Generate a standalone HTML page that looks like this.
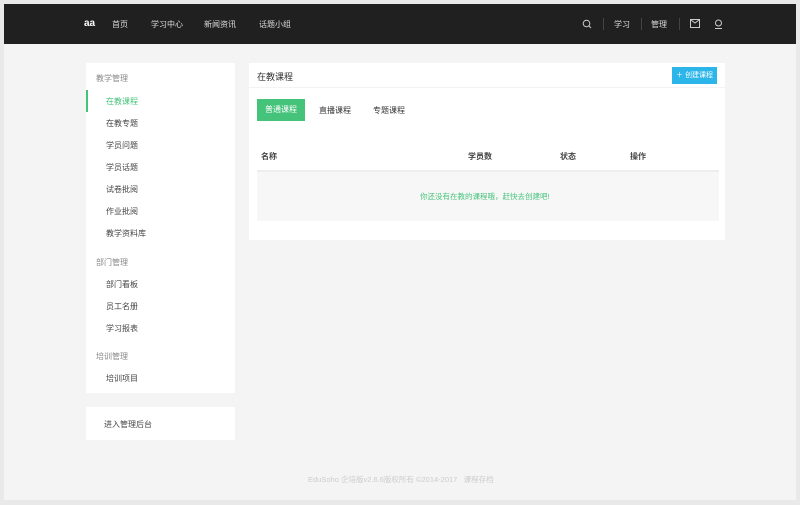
<!DOCTYPE html>
<html><head><meta charset="utf-8"><style>
*{margin:0;padding:0;box-sizing:border-box}
body{width:800px;height:505px;background:#e9e9e9;font-family:"Liberation Sans","Noto Sans CJK SC",sans-serif;font-size:8px;color:#333;position:relative;overflow:hidden}
.page{position:absolute;left:4px;top:4px;width:792px;height:496px;background:#f4f4f4}
.hd{position:absolute;left:0;top:0;width:792px;height:40px;background:#202020;color:#ddd}
.hd span{position:absolute;top:15px;font-size:8px}
.sep{position:absolute;top:14px;width:1px;height:12px;background:#444}
.box{position:absolute;background:#fff}
.side div{position:absolute;font-size:8px;color:#444}
.side .g{color:#888}
.abs{position:absolute}
</style></head><body><div class="page">
<div class="hd">
<span style="left:80px;top:14px;font-size:10px;font-weight:bold;color:#fff">aa</span>
<span style="left:108px">首页</span>
<span style="left:147px">学习中心</span>
<span style="left:200px">新闻资讯</span>
<span style="left:255px">话题小组</span>
<svg class="abs" style="left:578px;top:15px" width="10" height="10" viewBox="0 0 10 10"><circle cx="4.5" cy="4.5" r="3.3" fill="none" stroke="#ccc" stroke-width="1"/><path d="M7 7l2 2" stroke="#ccc"/></svg>
<div class="sep" style="left:599px"></div>
<span style="left:610px">学习</span>
<div class="sep" style="left:637px"></div>
<span style="left:647px">管理</span>
<div class="sep" style="left:675px"></div>
<svg class="abs" style="left:686px;top:15px" width="10" height="9" viewBox="0 0 10 9"><rect x=".5" y=".5" width="9" height="8" fill="none" stroke="#ccc"/><path d="M1 1l4 3 4-3" fill="none" stroke="#ccc"/></svg>
<svg class="abs" style="left:710px;top:15px" width="9" height="10" viewBox="0 0 9 10"><circle cx="4.5" cy="4" r="3" fill="none" stroke="#ccc"/><path d="M1 9.5h7" stroke="#ccc"/></svg>
</div>
<div class="box side" style="left:82px;top:59px;width:149px;height:330px">
<div class="g" style="left:10px;top:10px">教学管理</div>
<div style="left:0;top:27px;width:2px;height:22px;background:#46c37b"></div>
<div style="left:20px;top:33px;color:#46c37b">在教课程</div>
<div style="left:20px;top:55px">在教专题</div>
<div style="left:20px;top:77px">学员问题</div>
<div style="left:20px;top:99px">学员话题</div>
<div style="left:20px;top:121px">试卷批阅</div>
<div style="left:20px;top:143px">作业批阅</div>
<div style="left:20px;top:165px">教学资料库</div>
<div class="g" style="left:10px;top:194px">部门管理</div>
<div style="left:20px;top:216px">部门看板</div>
<div style="left:20px;top:238px">员工名册</div>
<div style="left:20px;top:260px">学习报表</div>
<div class="g" style="left:10px;top:288px">培训管理</div>
<div style="left:20px;top:310px">培训项目</div>
</div>
<div class="box" style="left:82px;top:403px;width:149px;height:33px"><span class="abs" style="left:18px;top:12px;color:#444">进入管理后台</span></div>
<div class="box" style="left:245px;top:59px;width:476px;height:177px">
<div class="abs" style="left:0;top:0;width:476px;height:25px;border-bottom:1px solid #f3f3f3"></div>
<span class="abs" style="left:8px;top:7px;font-size:9px;color:#333">在教课程</span>
<div class="abs" style="left:423px;top:4px;width:45px;height:17px;background:#2cb5e8;color:#fff;font-size:7px;line-height:17px;text-align:center">＋ 创建课程</div>
<div class="abs" style="left:8px;top:36px;width:48px;height:22px;background:#46c37b;color:#fff;line-height:22px;text-align:center">普通课程</div>
<span class="abs" style="left:70px;top:42px">直播课程</span>
<span class="abs" style="left:124px;top:42px">专题课程</span>
<span class="abs" style="left:12px;top:88px;font-weight:bold;color:#444">名称</span>
<span class="abs" style="left:219px;top:88px;font-weight:bold;color:#444">学员数</span>
<span class="abs" style="left:311px;top:88px;font-weight:bold;color:#444">状态</span>
<span class="abs" style="left:381px;top:88px;font-weight:bold;color:#444">操作</span>
<div class="abs" style="left:8px;top:107px;width:462px;height:51px;background:#f7f7f7;border-top:2px solid #eee"></div>
<span class="abs" style="left:171px;top:128px;color:#46c37b;font-size:7.5px">你还没有在教的课程哦，赶快去创建吧!</span>
</div>
<span class="abs" style="left:304px;top:470px;color:#ccc;font-size:7.5px">EduSoho 企培版v2.6.6版权所有 ©2014-2017 &nbsp; 课程存档</span>
</div></body></html>
